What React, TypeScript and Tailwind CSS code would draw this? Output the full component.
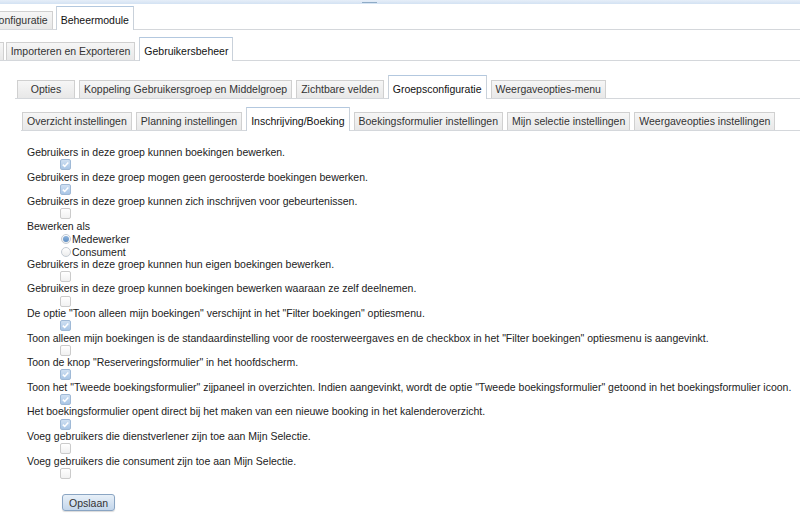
import type { ReactNode } from 'react'

type TabDef = { label: string; active?: boolean; className?: string }

function Tab({ label, active, className = '' }: TabDef) {
  if (active) {
    return (
      <div
        className={`relative -mb-px h-[24px] shrink-0 border border-b-0 border-[#c9d1da] border-t-[#b3c8df] bg-white px-[4px] pt-[5px] leading-[16px] whitespace-nowrap text-[#111] ${className}`}
      >
        {label}
      </div>
    )
  }
  return (
    <div
      className={`h-[18px] shrink-0 border border-b-0 border-[#d0d0d0] bg-gradient-to-b from-[#f6f6f6] to-[#e8e8e8] px-[4px] leading-[16px] whitespace-nowrap text-[#333] ${className}`}
    >
      {label}
    </div>
  )
}

function TabRow({ tabs, className = '' }: { tabs: TabDef[]; className?: string }) {
  return (
    <div className={`flex items-end gap-[4px] border-b border-[#d4d7db] ${className}`}>
      {tabs.map((t) => (
        <Tab key={t.label} {...t} />
      ))}
    </div>
  )
}

function Checkbox({ checked }: { checked?: boolean }) {
  if (checked) {
    return (
      <span className="flex h-[11px] w-[11px] items-center justify-center rounded-[2px] border border-[#9fb9d6] bg-gradient-to-b from-[#cfe0f2] to-[#a9c6e6]">
        <svg width="9" height="9" viewBox="0 0 9 9">
          <path d="M1.8 4.6 L3.7 6.4 L7.3 2.4" fill="none" stroke="#ffffff" strokeWidth="1.5" />
        </svg>
      </span>
    )
  }
  return <span className="block h-[11px] w-[11px] rounded-[2px] border border-[#cbcbcb] bg-gradient-to-b from-white to-[#f1f1f1]" />
}

function Radio({ checked, label }: { checked?: boolean; label: string }) {
  return (
    <div className="flex h-[12.5px] items-center pl-[34px]">
      <span className="flex h-[10px] w-[10px] items-center justify-center rounded-full border border-[#c4cbd3] bg-gradient-to-b from-white to-[#ececec]">
        {checked && <span className="block h-[6px] w-[6px] rounded-full bg-gradient-to-b from-[#8db3dc] to-[#5f8fc4]" />}
      </span>
      <span className="ml-[1px] leading-[12px]">{label}</span>
    </div>
  )
}

function Option({ label, checked }: { label: ReactNode; checked?: boolean }) {
  return (
    <div>
      <div className="h-[13px] leading-[13px] whitespace-nowrap">{label}</div>
      <div className="flex h-[11.6px] items-center pl-[33px]">
        <Checkbox checked={checked} />
      </div>
    </div>
  )
}

const options: { label: string; checked?: boolean }[] = [
  { label: 'Gebruikers in deze groep kunnen hun eigen boekingen bewerken.' },
  { label: 'Gebruikers in deze groep kunnen boekingen bewerken waaraan ze zelf deelnemen.' },
  { label: 'De optie "Toon alleen mijn boekingen" verschijnt in het "Filter boekingen" optiesmenu.', checked: true },
  {
    label:
      'Toon alleen mijn boekingen is de standaardinstelling voor de roosterweergaves en de checkbox in het "Filter boekingen" optiesmenu is aangevinkt.',
  },
  { label: 'Toon de knop "Reserveringsformulier" in het hoofdscherm.', checked: true },
  {
    label:
      'Toon het "Tweede boekingsformulier" zijpaneel in overzichten. Indien aangevinkt, wordt de optie "Tweede boekingsformulier" getoond in het boekingsformulier icoon.',
    checked: true,
  },
  { label: 'Het boekingsformulier opent direct bij het maken van een nieuwe booking in het kalenderoverzicht.', checked: true },
  { label: 'Voeg gebruikers die dienstverlener zijn toe aan Mijn Selectie.' },
  { label: 'Voeg gebruikers die consument zijn toe aan Mijn Selectie.' },
]

export default function App() {
  return (
    <div className="h-[522px] w-[800px] overflow-hidden bg-white font-['Liberation_Sans',Arial,sans-serif] text-[10.5px] text-[#222]">
      {/* header strip */}
      <div className="relative h-[4px] bg-gradient-to-b from-[#e6eef8] to-[#d3e2f3]">
        <span className="absolute left-[362px] top-[2px] h-[1px] w-[15px] bg-[#8eabc6]" />
      </div>

      <TabRow
        className="pt-[2px]"
        tabs={[
          { label: 'Configuratie', className: 'ml-[-14px] mr-[-1px]' },
          { label: 'Beheermodule', active: true },
        ]}
      />

      <TabRow
        className="mt-[7px]"
        tabs={[
          { label: 'Modules', className: 'ml-[-46px]' },
          { label: 'Importeren en Exporteren', className: 'ml-[-2px]' },
          { label: 'Gebruikersbeheer', active: true },
        ]}
      />

      <TabRow
        className="mt-[14px] ml-[15px]"
        tabs={[
          { label: 'Opties', className: 'ml-[2px] min-w-[58px] text-center' },
          { label: 'Koppeling Gebruikersgroep en Middelgroep' },
          { label: 'Zichtbare velden' },
          { label: 'Groepsconfiguratie', active: true },
          { label: 'Weergaveopties-menu' },
        ]}
      />

      <TabRow
        className="mt-[8px] ml-[21px]"
        tabs={[
          { label: 'Overzicht instellingen', className: 'ml-[1px]' },
          { label: 'Planning instellingen' },
          { label: 'Inschrijving/Boeking', active: true },
          { label: 'Boekingsformulier instellingen' },
          { label: 'Mijn selectie instellingen' },
          { label: 'Weergaveopties instellingen' },
        ]}
      />

      <div className="pl-[27px] pt-[15px]">
        <Option label="Gebruikers in deze groep kunnen boekingen bewerken." checked />
        <Option label="Gebruikers in deze groep mogen geen geroosterde boekingen bewerken." checked />
        <Option label="Gebruikers in deze groep kunnen zich inschrijven voor gebeurtenissen." />

        <div className="h-[13px] leading-[13px]">Bewerken als</div>
        <Radio label="Medewerker" checked />
        <Radio label="Consument" />

        {options.map((o) => (
          <Option key={o.label} label={o.label} checked={o.checked} />
        ))}

        <button className="mt-[15px] ml-[35px] h-[17px] rounded-[3px] border border-[#8aa5c3] bg-gradient-to-b from-[#e8f0f8] to-[#c3d6eb] px-[6px] leading-[14px] text-[#333] shadow-[0_1px_1px_rgba(0,0,0,0.15)]">
          Opslaan
        </button>
      </div>
    </div>
  )
}
